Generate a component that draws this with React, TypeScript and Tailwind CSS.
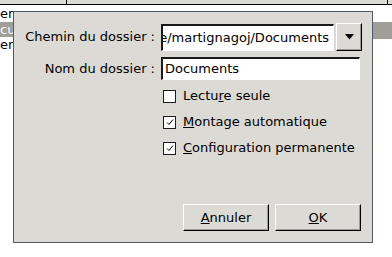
import React from 'react';

const font = { fontFamily: '"DejaVu Sans", Verdana, sans-serif' };

function Check() {
  return (
    <svg width="8" height="8" viewBox="0 0 8 8" className="block">
      <path d="M1 4.5 L3 6.5 L7 1.5" fill="none" stroke="#000" strokeWidth="1" />
    </svg>
  );
}

function CheckRow({ checked, children }: { checked: boolean; children: React.ReactNode }) {
  return (
    <div className="flex items-center h-[26px] pl-[149px]">
      <div className="w-[13px] h-[13px] bg-white border border-[#1c1c1c] flex items-center justify-center">
        {checked && <Check />}
      </div>
      <span className="ml-[7px]">{children}</span>
    </div>
  );
}

function Btn({ children }: { children: React.ReactNode }) {
  return (
    <button className="w-[86px] h-[27px] bg-[#dcdad5] border-t border-l border-white border-b border-r border-b-black border-r-black shadow-[inset_-1px_-1px_0_#9d9a94] flex items-center justify-center text-[13px] text-black">
      {children}
    </button>
  );
}

export default function App() {
  return (
    <div className="relative w-[392px] h-[257px] bg-white overflow-hidden text-[13px] text-black" style={font}>
      {/* window behind */}
      <div className="flex h-[5px] bg-[#dcdad5] border-b border-black">
        <div className="w-[67px] border-r border-black" />
        <div className="w-[321px] border-r border-black" />
      </div>
      <div className="flex flex-col leading-[16px]">
        <div className="h-[17px] pt-[1px]">er</div>
        <div className="h-[15px] bg-[#a09e99] text-white flex">
          <span className="w-[40px]">cu</span>
        </div>
        <div className="h-[16px]">er</div>
      </div>
      <div className="absolute left-[372px] top-[25px] w-[20px] h-[14px] bg-[#a09e99]" />

      {/* dialog */}
      <div className="absolute left-[13px] top-[11px] w-[360px] h-[232px] bg-[#dcdad5] border border-[#505a66] flex flex-col">
        <div className="flex items-center mt-[11px] h-[28px]">
          <div className="w-[142px] text-right pr-[1px]">Chemin du dossier :</div>
          <div className="ml-[5px] w-[173px] h-[27px] bg-white border-t-2 border-l-2 border-t-[#1a1a1a] border-l-[#1a1a1a] border-b border-r border-b-white border-r-white overflow-hidden flex items-center justify-end pr-[3px] whitespace-nowrap">
            <span>/home/martignagoj/Documents</span>
            <span className="inline-block w-[1px] h-[15px] bg-black ml-[1px]" />
          </div>
          <div className="ml-[2px] w-[26px] h-[28px] border-t border-l border-white border-b border-r border-b-black border-r-black shadow-[inset_-1px_-1px_0_#9d9a94] flex items-center justify-center">
            <svg width="9" height="6" viewBox="0 0 9 6">
              <path d="M0 0 H9 L4.5 5.5 Z" fill="#000" />
            </svg>
          </div>
        </div>
        <div className="flex items-center mt-[6px] h-[23px]">
          <div className="w-[142px] text-right pr-[1px]">Nom du dossier :</div>
          <div className="ml-[5px] w-[199px] h-[23px] bg-white border-t-2 border-l-2 border-t-[#1a1a1a] border-l-[#1a1a1a] border-b border-r border-b-white border-r-white flex items-center pl-[2px]">
            Documents
          </div>
        </div>
        <div className="mt-[3px] flex flex-col">
          <CheckRow checked={false}>
            Lectu<span className="underline">r</span>e seule
          </CheckRow>
          <CheckRow checked={true}>
            <span className="underline">M</span>ontage automatique
          </CheckRow>
          <CheckRow checked={true}>
            <span className="underline">C</span>onfiguration permanente
          </CheckRow>
        </div>
        <div className="mt-auto mb-[11px] flex justify-end gap-[6px] pr-[11px]">
          <Btn>
            <span className="underline">A</span>nnuler
          </Btn>
          <Btn>
            <span className="underline">O</span>K
          </Btn>
        </div>
      </div>
    </div>
  );
}
